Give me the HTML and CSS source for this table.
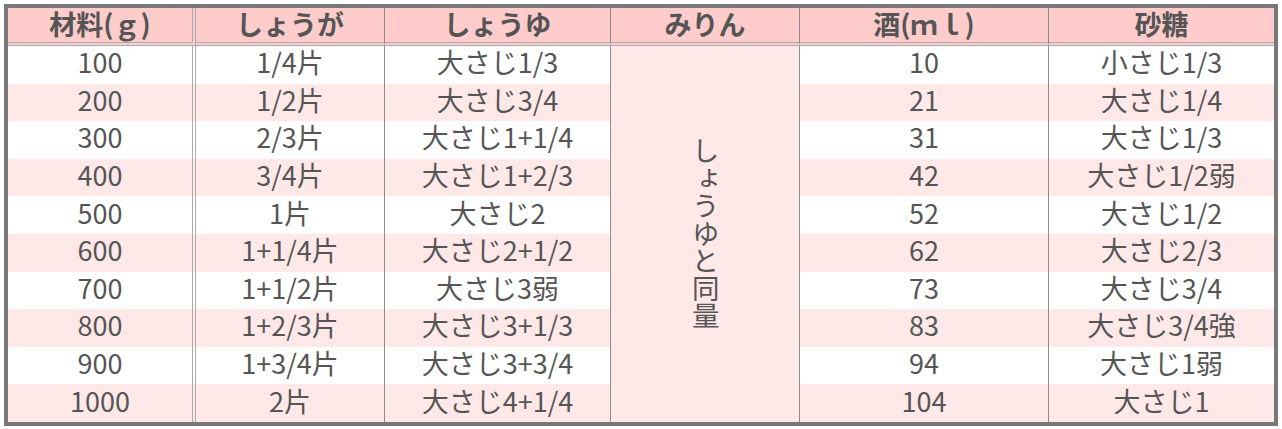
FILE: index.html
```html
<!DOCTYPE html>
<html lang="ja">
<head>
<meta charset="utf-8">
<title>しょうがの分量表</title>
<link rel="stylesheet" href="styles.css">
</head>
<body>
<table class="recipe">
  <colgroup>
    <col class="c1"><col class="c2"><col class="c3"><col class="c4"><col class="c5"><col class="c6">
  </colgroup>
  <thead>
    <tr>
      <th class="first">材料(ｇ)</th>
      <th>しょうが</th>
      <th>しょうゆ</th>
      <th>みりん</th>
      <th>酒(ｍｌ)</th>
      <th class="last">砂糖</th>
    </tr>
  </thead>
  <tbody>
    <tr><td class="first">100</td><td>1/4片</td><td>大さじ1/3</td><td class="mirin" rowspan="10"><span class="vert">しょうゆと同量</span></td><td>10</td><td class="last">小さじ1/3</td></tr>
    <tr><td class="first">200</td><td>1/2片</td><td>大さじ3/4</td><td>21</td><td class="last">大さじ1/4</td></tr>
    <tr><td class="first">300</td><td>2/3片</td><td>大さじ1+1/4</td><td>31</td><td class="last">大さじ1/3</td></tr>
    <tr><td class="first">400</td><td>3/4片</td><td>大さじ1+2/3</td><td>42</td><td class="last">大さじ1/2弱</td></tr>
    <tr><td class="first">500</td><td>1片</td><td>大さじ2</td><td>52</td><td class="last">大さじ1/2</td></tr>
    <tr><td class="first">600</td><td>1+1/4片</td><td>大さじ2+1/2</td><td>62</td><td class="last">大さじ2/3</td></tr>
    <tr><td class="first">700</td><td>1+1/2片</td><td>大さじ3弱</td><td>73</td><td class="last">大さじ3/4</td></tr>
    <tr><td class="first">800</td><td>1+2/3片</td><td>大さじ3+1/3</td><td>83</td><td class="last">大さじ3/4強</td></tr>
    <tr><td class="first">900</td><td>1+3/4片</td><td>大さじ3+3/4</td><td>94</td><td class="last">大さじ1弱</td></tr>
    <tr><td class="first">1000</td><td>2片</td><td>大さじ4+1/4</td><td>104</td><td class="last">大さじ1</td></tr>
  </tbody>
</table>
</body>
</html>
```

FILE: styles.css
```css
html, body {
  margin: 0;
  padding: 0;
  background: #ffffff;
}

body {
  padding: 4px;
  font-family: "Noto Sans CJK JP", "Noto Sans", sans-serif;
  color: #555555;
}

.recipe {
  box-sizing: border-box;
  width: 1274px;
  table-layout: fixed;
  border-collapse: separate;
  border-spacing: 0;
  border: 4px solid #787878;
  font-size: 27px;
  line-height: 1;
}

.c1 { width: 188px; }
.c2 { width: 189px; }
.c3 { width: 226px; }
.c4 { width: 189px; }
.c5 { width: 249px; }
.c6 { width: 225px; }

.recipe th,
.recipe td {
  box-sizing: border-box;
  padding: 0;
  text-align: center;
  vertical-align: middle;
  border-right: 1px solid #8c8c8c;
}

.recipe th {
  height: 38px;
  padding-bottom: 4px;
  background: #ffcccc;
  font-weight: bold;
  border-bottom: 4px double #ababab;
}

.recipe td {
  height: 37.6px;
  padding-bottom: 6px;
  background: #ffffff;
  font-weight: normal;
}

.recipe tbody tr:nth-child(even) td {
  background: #ffe8e8;
}

.recipe .first {
  border-right: 4px double #ababab;
}

.recipe .last {
  border-right: none;
}

.recipe td.mirin {
  background: #ffe8e8;
  padding-bottom: 0;
}

.vert {
  display: inline-block;
  writing-mode: vertical-rl;
  text-orientation: mixed;
  font-size: 27.5px;
  line-height: 1;
}
```
